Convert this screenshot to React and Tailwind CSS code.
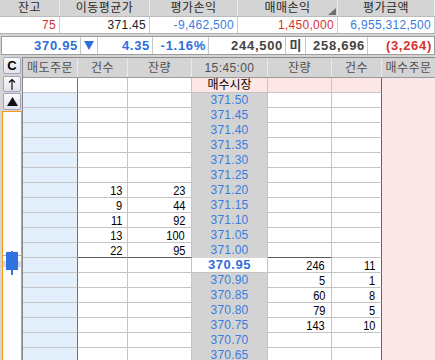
import React from 'react';

const FONT = "font-['Liberation_Sans','Noto_Sans_CJK_KR',sans-serif]";

const sell = [
  ['371.50', '', ''],
  ['371.45', '', ''],
  ['371.40', '', ''],
  ['371.35', '', ''],
  ['371.30', '', ''],
  ['371.25', '', ''],
  ['371.20', '13', '23'],
  ['371.15', '9', '44'],
  ['371.10', '11', '92'],
  ['371.05', '13', '100'],
  ['371.00', '22', '95'],
];
const buy = [
  ['370.95', '246', '11'],
  ['370.90', '5', '1'],
  ['370.85', '60', '8'],
  ['370.80', '79', '5'],
  ['370.75', '143', '10'],
  ['370.70', '', ''],
  ['370.65', '', ''],
];

function TopHeader() {
  const cols = [
    ['잔고', 'w-[60px]'],
    ['이동평균가', 'w-[90px]'],
    ['평가손익', 'w-[88px]'],
    ['매매손익', 'w-[100px]'],
    ['평가금액', 'flex-1'],
  ];
  return (
    <div className="flex h-[17px] border-b border-[#bcbcbc] bg-[#d4d4d4]">
      {cols.map(([t, w], i) => (
        <div
          key={i}
          className={`${w} relative flex items-center justify-center border-r border-[#ececec] text-[12px] leading-none tracking-[0.5px] text-[#2a2a2a]`}
        >
          {t}
          {i === 3 && (
            <svg className="absolute right-[1px] bottom-[1px]" width="8" height="7" viewBox="0 0 8 7">
              <polygon points="8,0 8,7 0,7" fill="#6e6e6e" />
            </svg>
          )}
        </div>
      ))}
    </div>
  );
}

function TopData() {
  const cols = [
    ['75', 'w-[60px]', 'text-[#d8312f]'],
    ['371.45', 'w-[90px]', 'text-[#222]'],
    ['-9,462,500', 'w-[88px]', 'text-[#3a7de0]'],
    ['1,450,000', 'w-[100px]', 'text-[#d8312f]'],
    ['6,955,312,500', 'flex-1', 'text-[#3a7de0]'],
  ];
  return (
    <div className="flex h-[17px] border-b border-[#b4b4b4] bg-white">
      {cols.map(([t, w, c], i) => (
        <div
          key={i}
          className={`${w} ${c} flex items-center justify-end border-r border-[#cccccc] pr-[3px] text-[12px] leading-none tracking-[0.3px]`}
        >
          {t}
        </div>
      ))}
    </div>
  );
}

function PriceBar() {
  const cell = 'flex items-center justify-end border-r border-[#c8c8c8] pr-[2px] text-[13px] font-bold leading-none tracking-[0.7px]';
  return (
    <div className="ml-[1px] mt-[2px] flex h-[19px] border border-[#9c9c9c] bg-white">
      <div className={`${cell} w-[79px] text-[#2f6fdc]`}>370.95</div>
      <div className="flex w-[17px] items-center justify-center border-r border-[#c8c8c8]">
        <svg width="10" height="9" viewBox="0 0 10 9">
          <polygon points="0,0 10,0 5,9" fill="#2f6fdc" />
        </svg>
      </div>
      <div className={`${cell} w-[55px] text-[#2f6fdc]`}>4.35</div>
      <div className={`${cell} w-[56px] text-[#2f6fdc]`}>-1.16%</div>
      <div className={`${cell} w-[77px] text-[#444]`}>244,500</div>
      <div className="flex w-[20px] items-center justify-center border-r border-[#c8c8c8] text-[13px] font-bold leading-none text-[#444]">미</div>
      <div className={`${cell} w-[62px] text-[#444]`}>258,696</div>
      <div className={`${cell} flex-1 border-r-0 text-[#d8312f]`}>(3,264)</div>
    </div>
  );
}

function SideButton({ children, h }) {
  return (
    <div
      className={`ml-[3px] flex w-[18px] ${h} items-center justify-center rounded-[2px] border border-[#a4a4bc] bg-gradient-to-b from-[#fbfbfd] to-[#e2e2ea]`}
    >
      {children}
    </div>
  );
}

function Sidebar() {
  return (
    <div className="flex w-[22px] flex-col bg-[#d4d4d4]">
      <SideButton h="h-[17px]">
        <span className="text-[13px] font-bold leading-none text-black">C</span>
      </SideButton>
      <div className="mt-[2px]">
        <SideButton h="h-[16px]">
          <svg width="8" height="11" viewBox="0 0 8 11">
            <path d="M4 0.5 L4 11 M1 3.5 L4 0.5 L7 3.5" stroke="#111" strokeWidth="1.2" fill="none" />
          </svg>
        </SideButton>
      </div>
      <div className="mt-[1px]">
        <SideButton h="h-[17px]">
          <svg width="11" height="9" viewBox="0 0 11 9">
            <polygon points="5.5,0 11,9 0,9" fill="#111" />
          </svg>
        </SideButton>
      </div>
      <div className="ml-[2px] mt-[1px] flex-1 border-x border-t border-[#f59a16] bg-white">
        <svg className="mt-[138px] block" width="18" height="26" viewBox="0 0 18 26">
          <rect x="0" y="11" width="18" height="6" fill="#ddd6ec" />
          <rect x="0" y="5" width="18" height="1" fill="#b4b4b4" />
          <rect x="8" y="1" width="2" height="24" fill="#2f72e0" />
          <rect x="3" y="2" width="12" height="18" fill="#2f72e0" />
        </svg>
      </div>
    </div>
  );
}

const W = ['w-[55px]', 'w-[50px]', 'w-[64px]', 'w-[76px]', 'w-[64px]', 'w-[50px]', 'flex-1'];

function GridHeader() {
  const t = ['매도주문', '건수', '잔량', '15:45:00', '잔량', '건수', '매수주문'];
  return (
    <div className="flex h-[20px] border-b border-[#9a9a9a] bg-[#d4d4d4]">
      {t.map((x, i) => (
        <div
          key={i}
          className={`${W[i]} flex items-center justify-center border-r border-[#eaeaea] text-[12px] leading-none tracking-[0.4px] text-[#505050] ${i === 6 ? 'border-r-0' : ''}`}
        >
          {x}
        </div>
      ))}
    </div>
  );
}

function Num({ v }) {
  return <span className="inline-block origin-right scale-x-[0.85] text-[13px] text-black">{v}</span>;
}

function Row({ idx, price, a, b, side }) {
  const first = idx === 0;
  const dark = idx === 11;
  const cur = idx === 12;
  const bb = dark ? 'border-b-[#5c5c5c]' : '';
  return (
    <div className="flex h-[15px] leading-[14px]">
      <div className={`${W[0]} border-b border-r border-b-[#c4c4c4] border-r-[#3a78d8] ${first ? 'bg-white' : 'bg-[#e3effb]'} ${bb}`} />
      <div className={`${W[1]} border-b border-r border-[#c4c4c4] bg-white pr-[5px] text-right ${bb}`}>
        {side === 'sell' && a ? <Num v={a} /> : null}
      </div>
      <div className={`${W[2]} border-b border-r border-[#c4c4c4] bg-white pr-[6px] text-right ${bb}`}>
        {side === 'sell' && b ? <Num v={b} /> : null}
      </div>
      <div
        className={`${W[3]} border-b border-r text-center ${
          first
            ? 'border-b-[#c4c4c4] border-r-[#c4c4c4] bg-[#fde6e6] text-[12px] text-black'
            : cur
            ? 'border-[#c4c4c4] bg-white text-[13px] font-bold tracking-[0.5px] text-[#2f6fdc]'
            : 'border-b-[#d3d3d3] border-r-[#c4c4c4] bg-[#d3d3d3] text-[12px] tracking-[0.2px] text-[#3a7de0]'
        } ${bb}`}
      >
        {first ? '매수시장' : price}
      </div>
      <div className={`${W[4]} border-b border-r border-[#c4c4c4] ${first ? 'bg-[#fde6e6]' : 'bg-white'} pr-[6px] text-right ${bb}`}>
        {side === 'buy' && a ? <Num v={a} /> : null}
      </div>
      <div className={`${W[5]} border-b border-r border-b-[#c4c4c4] border-r-[#d8302c] ${first ? 'bg-[#fde6e6]' : 'bg-white'} pr-[6px] text-right ${bb}`}>
        {side === 'buy' && b ? <Num v={b} /> : null}
      </div>
      <div className={`${W[6]} border-b border-b-[#fbe6e8] bg-[#fbe6e8] ${bb}`} />
    </div>
  );
}

export default function App() {
  const rows = [
    { price: '', a: '', b: '', side: 'none' },
    ...sell.map(([p, a, b]) => ({ price: p, a, b, side: 'sell' })),
    ...buy.map(([p, a, b]) => ({ price: p, a, b, side: 'buy' })),
  ];
  return (
    <div className={`${FONT} h-[360px] w-[435px] overflow-hidden bg-[#d4d4d4]`}>
      <TopHeader />
      <TopData />
      <PriceBar />
      <div className="mt-[2px] flex h-[303px]">
        <Sidebar />
        <div className="flex-1 overflow-hidden border-l border-t border-[#8a8a8a]">
          <GridHeader />
          {rows.map((r, i) => (
            <Row key={i} idx={i} {...r} />
          ))}
        </div>
      </div>
    </div>
  );
}
